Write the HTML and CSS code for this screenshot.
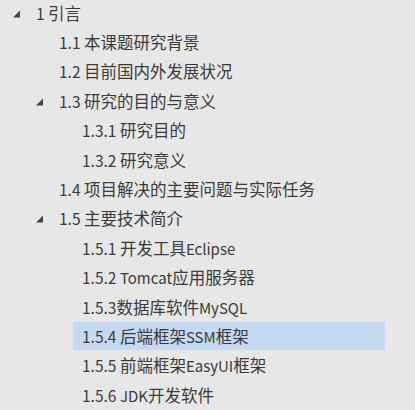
FILE: index.html
```html
<!DOCTYPE html>
<html lang="zh-CN">
<head>
<meta charset="utf-8">
<link rel="stylesheet" href="styles.css">
</head>
<body>
<ul class="tree">
  <li class="row l1"><span class="tw"><svg viewBox="0 0 7 7" class="arrow"><polygon points="7,0 7,7 0,7"/></svg></span><span class="label"><span class="num">1 </span>引言</span></li>
  <li class="row l2"><span class="tw"></span><span class="label"><span class="num">1.1 </span>本课题研究背景</span></li>
  <li class="row l2"><span class="tw"></span><span class="label"><span class="num">1.2 </span>目前国内外发展状况</span></li>
  <li class="row l2"><span class="tw"><svg viewBox="0 0 7 7" class="arrow"><polygon points="7,0 7,7 0,7"/></svg></span><span class="label"><span class="num">1.3 </span>研究的目的与意义</span></li>
  <li class="row l3"><span class="tw"></span><span class="label"><span class="num">1.3.1 </span>研究目的</span></li>
  <li class="row l3"><span class="tw"></span><span class="label"><span class="num">1.3.2 </span>研究意义</span></li>
  <li class="row l2"><span class="tw"></span><span class="label"><span class="num">1.4 </span>项目解决的主要问题与实际任务</span></li>
  <li class="row l2"><span class="tw"><svg viewBox="0 0 7 7" class="arrow"><polygon points="7,0 7,7 0,7"/></svg></span><span class="label"><span class="num">1.5 </span>主要技术简介</span></li>
  <li class="row l3"><span class="tw"></span><span class="label"><span class="num">1.5.1 </span>开发工具<span class="lat">Eclipse</span></span></li>
  <li class="row l3"><span class="tw"></span><span class="label"><span class="num">1.5.2 </span><span class="lat">Tomcat</span>应用服务器</span></li>
  <li class="row l3"><span class="tw"></span><span class="label"><span class="num">1.5.3</span>数据库软件<span class="lat">MySQL</span></span></li>
  <li class="row l3 selected"><span class="tw"></span><span class="label"><span class="num">1.5.4 </span>后端框架<span class="lat">SSM</span>框架</span></li>
  <li class="row l3"><span class="tw"></span><span class="label"><span class="num">1.5.5 </span>前端框架<span class="lat">EasyUI</span>框架</span></li>
  <li class="row l3"><span class="tw"></span><span class="label"><span class="num">1.5.6 </span><span class="lat">JDK</span>开发软件</span></li>
</ul>
</body>
</html>
```
FILE: styles.css
```css
html, body {
  margin: 0;
  padding: 0;
  background: #e7e7e7;
  overflow: hidden;
}
.tree {
  list-style: none;
  margin: -2px 0 0 0;
  padding: 0;
  width: 385px;
  font-family: "Noto Sans CJK SC", "Noto Sans", sans-serif;
  font-size: 16.5px;
  color: #3b3b3b;
}
.row {
  height: 29.4px;
  display: flex;
  align-items: center;
  white-space: nowrap;
}
.row.l1 { padding-left: 13px; }
.row.l2 { padding-left: 36px; }
.row.l3 { padding-left: 59px; }
.tw {
  width: 23px;
  flex: none;
  display: flex;
  align-items: center;
}
.arrow {
  width: 7px;
  height: 8px;
  fill: #444444;
  margin-top: 2px;
}
.num { font-size: 15.5px; }
.lat { font-size: 15px; }
.row.selected {
  background: linear-gradient(#e7e7e7 0.7px, #c6d9f3 0.7px, #c6d9f3 28.7px, #e7e7e7 28.7px);
  margin-left: 73px;
  padding-left: 9px;
}
.row.selected .tw { display: none; }
```
